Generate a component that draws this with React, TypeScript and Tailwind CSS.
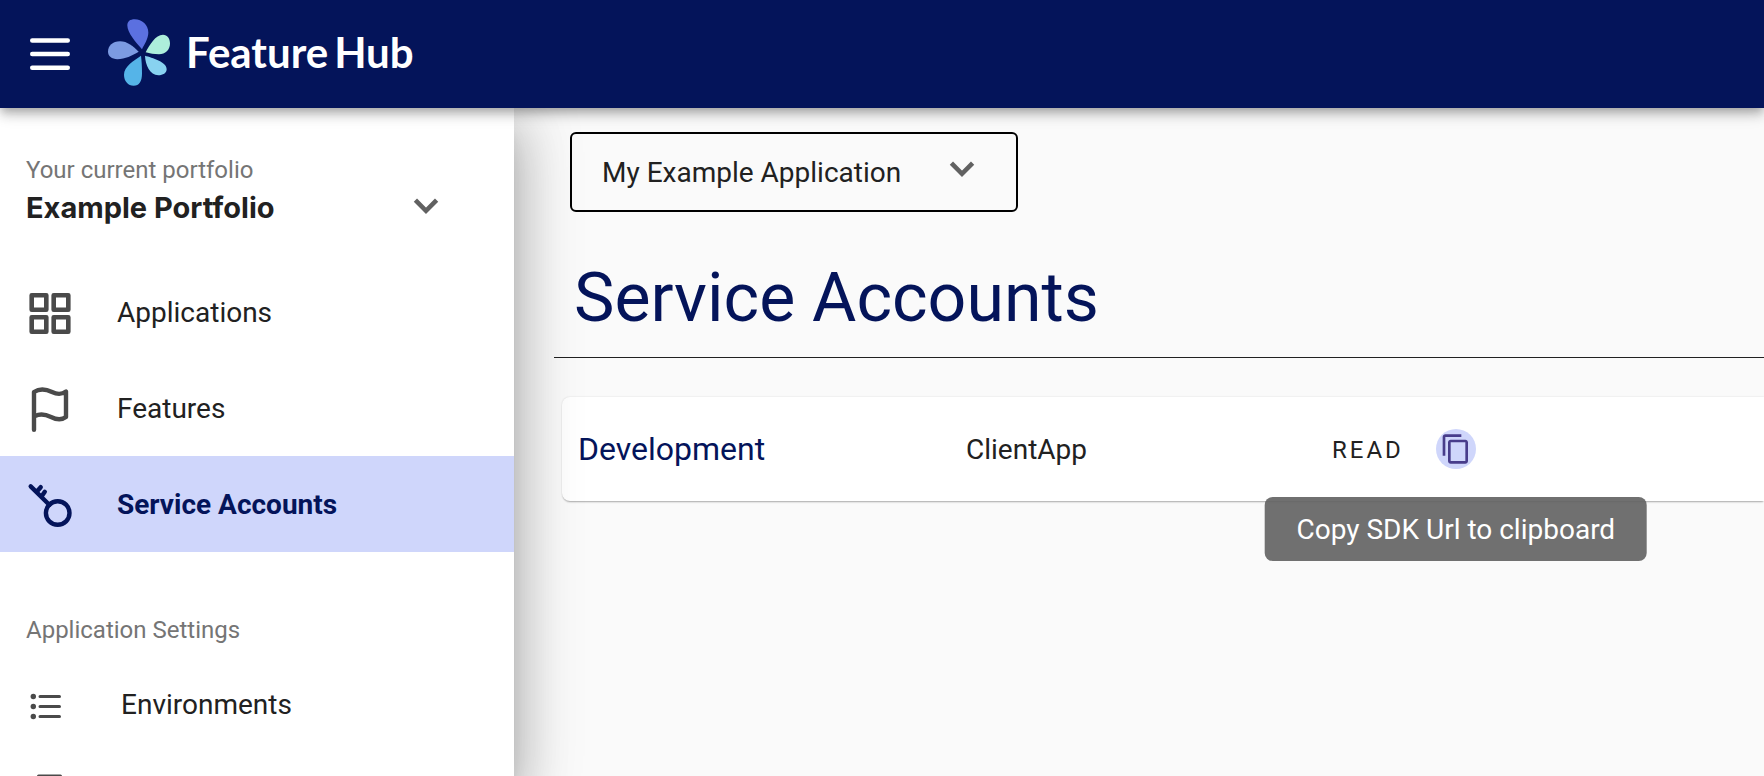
import type { ReactNode } from "react";
import { MdContentCopy } from "react-icons/md";

function Petals() {
  return (
    <svg viewBox="54 27 186 200" className="h-[67px] w-[62px]" aria-hidden="true">
      <path fill="#5b70e0" d="M156 117C138 97 112 68 112 46C112 33 120 27 134 27C156 27 175 44 175 67C175 86 163 103 156 117Z" />
      <path fill="#adeedb" d="M167 126C180 104 196 74 219 74C232 74 240 86 240 100C240 119 226 132 207 132C192 132 180 129 167 126Z" />
      <path fill="#7c9be2" d="M146 125C130 108 112 93 90 93C68 93 54 107 54 124C54 138 65 147 82 147C106 147 126 137 146 125Z" />
      <path fill="#55b4e8" d="M153 137C131 152 102 169 102 194C102 213 114 227 131 227C148 227 156 213 156 190C156 170 155 152 153 137Z" />
      <path fill="#88d2f0" d="M165 137C186 143 230 155 230 177C230 188 219 195 205 195C180 195 166 166 165 137Z" />
    </svg>
  );
}

const iconClass = "size-12 shrink-0 fill-none stroke-current";

const GridIcon = () => (
  <svg viewBox="0 0 48 48" className={iconClass} strokeWidth="4.6" strokeLinejoin="round">
    <rect x="5.7" y="7.2" width="14.6" height="14.6" />
    <rect x="27.7" y="7.2" width="14.6" height="14.6" />
    <rect x="5.7" y="29.2" width="14.6" height="14.6" />
    <rect x="27.7" y="29.2" width="14.6" height="14.6" />
  </svg>
);

const FlagIcon = () => (
  <svg viewBox="0 0 48 48" className={iconClass} strokeWidth="4.4" strokeLinejoin="round" strokeLinecap="round">
    <path d="M8 45.700V8C14 4 21 5.500 26 8C31 10.500 36 10.500 40 7.500V33C36 36 30 35.500 25 33C20 30.500 14 29.500 9 32" />
  </svg>
);

const KeyIcon = () => (
  <svg viewBox="0 0 48 48" className={iconClass} strokeWidth="4.4" strokeLinejoin="round" strokeLinecap="round">
    <circle cx="31.7" cy="33" r="11.8" />
    <path d="M4.700 6.400L23.500 25M10.500 12L14.700 7.200M15.500 16.500L18.800 11.800" />
  </svg>
);

const ListIcon = () => (
  <svg viewBox="0 0 32 32" className="size-8 shrink-0 fill-current stroke-current">
    <g stroke="none">
      <circle cx="3.300" cy="8.500" r="2.700" />
      <circle cx="3.300" cy="18.500" r="2.700" />
      <circle cx="3.300" cy="28.500" r="2.700" />
    </g>
    <path d="M10 8.500H29.500M10 18.500H29.500M10 28.500H29.500" strokeWidth="3" strokeLinecap="round" />
  </svg>
);

const DocumentIcon = () => (
  <svg viewBox="0 0 32 32" className="size-8 shrink-0 fill-none stroke-current" strokeWidth="3" strokeLinejoin="round">
    <path d="M8.500 6H30.500V29.500H8.500Z" />
  </svg>
);

const Chevron = () => (
  <svg viewBox="0 0 24 24" className="size-12 fill-none stroke-[#616161]" strokeWidth="2.3" aria-hidden="true">
    <path d="M6.700 8.600L12 13.900L17.300 8.600" />
  </svg>
);

function NavItem({ icon, label, active }: { icon: ReactNode; label: string; active?: boolean }) {
  return (
    <a
      href="#"
      aria-current={active ? "page" : undefined}
      className={
        active
          ? "flex h-24 items-center gap-[43px] bg-[#cfd6fb] pl-[26px] text-[28px] font-bold text-[#04145a]"
          : "flex h-24 items-center gap-[43px] pl-[26px] text-[28px] text-[#4a4a4a]"
      }
    >
      {icon}
      <span className={active ? "pt-0.5" : "pt-0.5 text-[#212121]"}>{label}</span>
    </a>
  );
}

export default function App() {
  return (
    <div className="flex h-screen flex-col overflow-hidden bg-[#fafafa] font-[Roboto,sans-serif] text-[#212121]">
      <header className="z-20 flex h-[108px] shrink-0 items-center bg-[#04145a] pl-[30px] shadow-[0_4px_8px_-2px_rgba(0,0,0,0.2),0_8px_10px_0_rgba(0,0,0,0.14),0_2px_20px_0_rgba(0,0,0,0.12)]">
        <button type="button" aria-label="Menu" className="size-10">
          <svg viewBox="0 0 40 40" className="size-10 stroke-white" strokeWidth="4.4" strokeLinecap="round">
            <path d="M2.200 6.500H37.800M2.200 20H37.800M2.200 33.700H37.800" />
          </svg>
        </button>
        <a href="#" className="ml-[38px] flex items-center gap-4 pb-1">
          <Petals />
          <span className="font-[Lato,sans-serif] text-[42px] leading-none font-bold text-white">
            Feature<span className="ml-1.5">Hub</span>
          </span>
        </a>
      </header>

      <div className="flex min-h-0 flex-1">
        <aside className="z-10 flex w-[514px] shrink-0 flex-col bg-white shadow-[0_32px_48px_4px_rgba(0,0,0,0.18),0_12px_60px_10px_rgba(0,0,0,0.16),0_16px_20px_-10px_rgba(0,0,0,0.2)]">
          <div className="flex flex-col px-[26px] pt-[46px] pb-9">
            <label htmlFor="portfolio" className="text-2xl text-[#757575]">
              Your current portfolio
            </label>
            <div className="grid grid-rows-[42px] items-center">
              <select
                id="portfolio"
                className="col-start-1 row-start-1 h-[42px] w-full appearance-none font-[Inter,sans-serif] text-[29px] font-bold text-[#212121]"
              >
                <option>Example Portfolio</option>
              </select>
              <span className="pointer-events-none col-start-1 row-start-1 mr-[38px] justify-self-end">
                <Chevron />
              </span>
            </div>
          </div>
          <nav className="flex flex-col">
            <NavItem icon={<GridIcon />} label="Applications" />
            <NavItem icon={<FlagIcon />} label="Features" />
            <NavItem icon={<KeyIcon />} label="Service Accounts" active />
          </nav>
          <h2 className="mt-[62px] px-[26px] text-2xl text-[#757575]">Application Settings</h2>
          <nav className="mt-6 flex flex-col">
            <a href="#" className="flex h-[68px] items-center gap-[59px] pl-[30px] text-[28px] text-[#4a4a4a]">
              <ListIcon />
              <span className="pt-0.5 text-[#212121]">Environments</span>
            </a>
            <a
              href="#"
              aria-label="Group permissions"
              className="flex h-24 items-center pl-[30px] text-[#4a4a4a]"
            >
              <DocumentIcon />
            </a>
          </nav>
        </aside>

        <main className="flex min-w-0 flex-1 flex-col pt-6 pl-10">
          <div className="ml-4 grid w-[448px] items-center">
            <select
              aria-label="Application"
              className="col-start-1 row-start-1 h-20 w-full appearance-none rounded-md border-2 border-black bg-transparent pt-0.5 pl-[30px] text-[28px] text-[#212121]"
            >
              <option>My Example Application</option>
            </select>
            <span className="pointer-events-none col-start-1 row-start-1 mr-8 mb-1 justify-self-end">
              <Chevron />
            </span>
          </div>
          <h1 className="mt-[41px] pl-5 text-[68px] leading-[90px] text-[#04145a]">Service Accounts</h1>
          <hr className="mt-3.5 border-t border-[#212121]" />
          <div className="mt-[39px] ml-2 grid h-[104px] grid-cols-[388px_366px_auto] items-center rounded-l-lg bg-white pl-4 shadow-[0_2px_2px_-1px_rgba(0,0,0,0.3),0_0_2px_rgba(0,0,0,0.14)]">
            <span className="text-[32px] text-[#04145a]">Development</span>
            <span className="pt-0.5 text-[28px]">ClientApp</span>
            <div className="flex items-center gap-8">
              <span className="pt-0.5 text-2xl tracking-[3px]">READ</span>
              <div className="relative size-10">
                <button
                  type="button"
                  aria-describedby="copy-tip"
                  aria-label="Copy"
                  className="flex size-10 items-center justify-center rounded-full bg-[#cfd6fb] text-[#483d8b]"
                >
                  <MdContentCopy className="size-8" />
                </button>
                <div
                  id="copy-tip"
                  role="tooltip"
                  className="absolute top-[68px] left-1/2 flex h-16 -translate-x-1/2 items-center rounded-lg bg-[#616161]/90 px-8 pt-0.5 text-[28px] whitespace-nowrap text-white"
                >
                  Copy SDK Url to clipboard
                </div>
              </div>
            </div>
          </div>
        </main>
      </div>
    </div>
  );
}
